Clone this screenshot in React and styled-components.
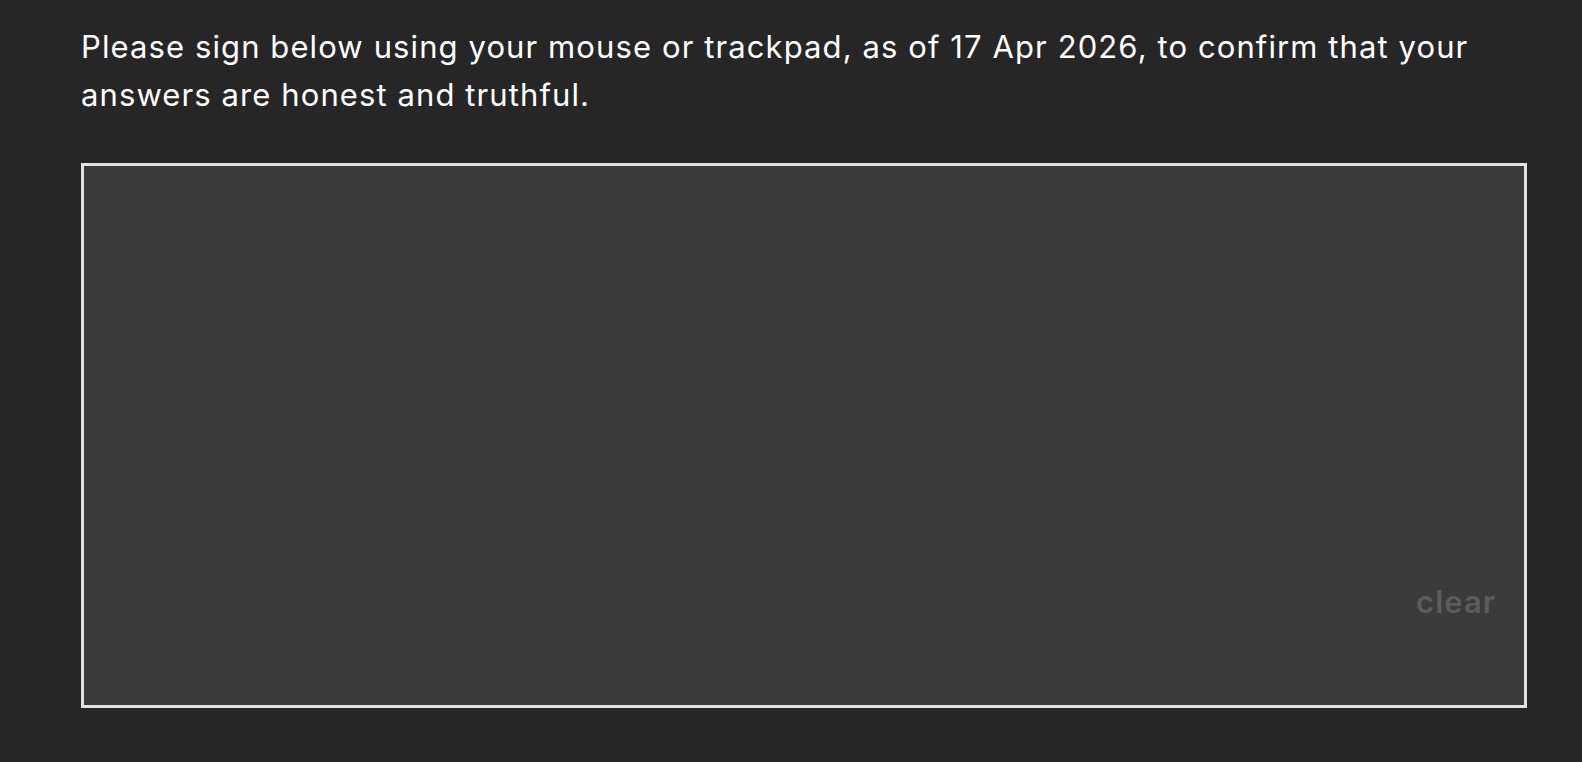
import React from "react";
import styled, { createGlobalStyle } from "styled-components";

const Global = createGlobalStyle`
  html, body { margin: 0; padding: 0; background: #262626; }
  body { font-family: Inter, "Noto Sans", sans-serif; }
`;

const Page = styled.main`
  box-sizing: border-box;
  width: 1582px;
  height: 762px;
  padding: 23px 55px 0 81px;
  background: #262626;
  display: flex;
  flex-direction: column;
  gap: 44px;
`;

const Prompt = styled.p`
  margin: 0;
  color: #ffffff;
  font-size: 31px;
  line-height: 48px;
  font-weight: 400;
  letter-spacing: 1.1px;
`;

const Pad = styled.div`
  box-sizing: border-box;
  height: 545px;
  border: 3px solid #e2e2e2;
  background: #3b3b3b;
  display: flex;
  align-items: flex-end;
  justify-content: flex-end;
  padding: 0 28px 88px 0;
`;

const Clear = styled.button`
  border: none;
  background: none;
  padding: 0;
  cursor: pointer;
  color: #5c5c5c;
  font-family: Inter, "Noto Sans", sans-serif;
  font-size: 31px;
  font-weight: 600;
  letter-spacing: 1px;
  line-height: 1;
`;

export default function App() {
  return (
    <>
      <Global />
      <Page>
        <Prompt>
          Please sign below using your mouse or trackpad, as of 17 Apr 2026, to confirm that your answers are honest and truthful.
        </Prompt>
        <Pad>
          <Clear type="button">clear</Clear>
        </Pad>
      </Page>
    </>
  );
}
